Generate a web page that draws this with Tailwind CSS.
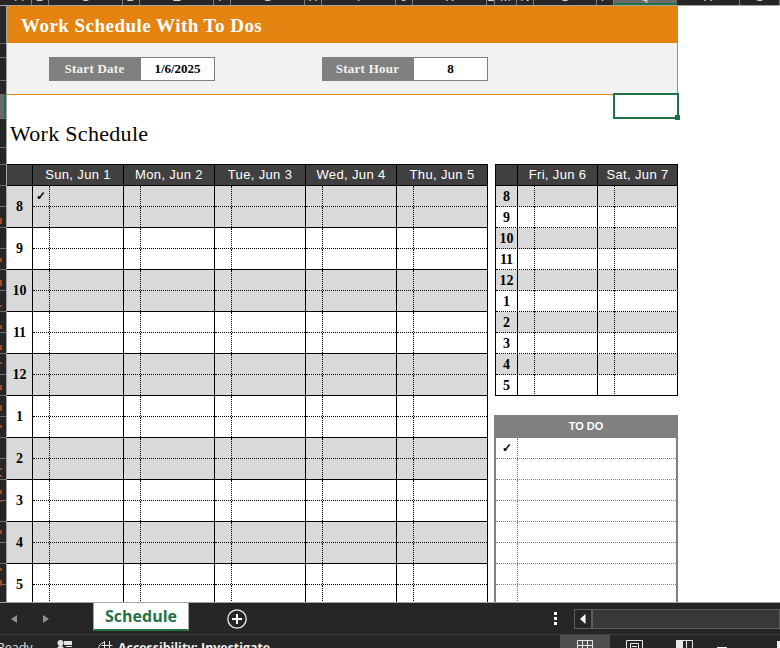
<!DOCTYPE html>
<html>
<head>
  <title>Work Schedule With To Dos</title>
  <script src="https://cdn.jsdelivr.net/npm/@tailwindcss/browser@4"></script>
</head>
<body class="bg-white">
  <div class="w-[780px] h-[648px] overflow-hidden flex flex-col font-['Liberation_Sans',sans-serif]">

    <!-- column letters, clipped by the ribbon above -->
    <div id="colHead" class="h-[6px] shrink-0 flex bg-[#262626] border-b border-[#a3a3a3] text-[#d4d4d4] text-[13px] leading-none overflow-hidden"></div>

    <div class="h-[596px] shrink-0 flex overflow-hidden relative">
      <!-- row numbers strip -->
      <div id="rowHead" class="w-[7px] shrink-0 bg-[#262626] border-r border-[#a3a3a3] relative overflow-hidden"></div>

      <!-- sheet -->
      <div class="flex-1 relative">
        <div class="w-[671px] h-[37px] bg-[#e58310] flex items-center pl-[14px] pt-[3px] text-white font-bold text-[19px] font-['Liberation_Serif',serif] tracking-[0.47px]">Work Schedule With To Dos</div>

        <div class="w-[671px] h-[52px] bg-[#f2f2f2] border-r border-b border-[#e58310] flex pt-[14px] pl-[42px] font-['Liberation_Serif',serif] text-[13px] font-bold">
          <div class="w-[91px] h-[24px] bg-[#808080] text-[#f2f2f2] flex items-center justify-center tracking-[0.25px]">Start Date</div>
          <div class="w-[75px] h-[24px] bg-white border border-[#808080] flex items-center justify-center text-black">1/6/2025</div>
          <div class="w-[107px]"></div>
          <div class="w-[91px] h-[24px] bg-[#808080] text-[#f2f2f2] flex items-center justify-center tracking-[0.25px]">Start Hour</div>
          <div class="w-[75px] h-[24px] bg-white border border-[#808080] flex items-center justify-center text-black">8</div>
        </div>

        <div class="h-[69px] pl-[3px] pt-[24px] text-[22px] leading-[30px] tracking-[0.3px] text-black font-['Liberation_Serif',serif]">Work Schedule</div>

        <div class="flex items-start gap-[7px]">
          <!-- five day table -->
          <div class="w-[481px]">
            <div class="grid grid-cols-[26px_repeat(5,91px)] h-[22px] bg-[#404040] border-y border-black text-white text-[13px] tracking-[0.35px]">
              <div class="border-r border-black"></div>
              <div class="border-r border-black flex items-center justify-center">Sun, Jun 1</div>
              <div class="border-r border-black flex items-center justify-center">Mon, Jun 2</div>
              <div class="border-r border-black flex items-center justify-center">Tue, Jun 3</div>
              <div class="border-r border-black flex items-center justify-center">Wed, Jun 4</div>
              <div class="border-r border-black flex items-center justify-center">Thu, Jun 5</div>
            </div>
            <div id="mainRows"></div>
          </div>

          <!-- weekend + to do -->
          <div class="w-[183px]">
            <div class="grid grid-cols-[22px_80px_80px] h-[22px] bg-[#404040] border-y border-l border-black text-white text-[13px] tracking-[0.35px]">
              <div class="border-r border-black"></div>
              <div class="border-r border-black flex items-center justify-center">Fri, Jun 6</div>
              <div class="border-r border-black flex items-center justify-center">Sat, Jun 7</div>
            </div>
            <div id="sideRows" class="border-b border-black"></div>

            <div class="w-[184px] -ml-px mt-[19px] border-x-2 border-[#808080]">
              <div class="h-[23px] -mx-[2px] bg-[#808080] text-white text-[11px] font-bold flex items-center justify-center">TO DO</div>
              <div id="todoRows"></div>
            </div>
          </div>
        </div>

        <!-- selected cell -->
        <div class="absolute left-[606px] top-[87px] w-[66px] h-[26px] border-2 border-[#217346]"></div>
        <div class="absolute left-[668px] top-[109px] w-[5px] h-[5px] bg-[#217346]"></div>
      </div>
    </div>

    <!-- sheet tabs -->
    <div class="h-[32px] shrink-0 bg-[#262626] border-t border-[#a3a3a3] flex items-start relative">
      <svg class="absolute left-[11px] top-[12px]" width="6" height="8" viewBox="0 0 6 8"><path d="M6 0 L0 4 L6 8 Z" fill="#8f8f8f"/></svg>
      <svg class="absolute left-[43px] top-[12px]" width="6" height="8" viewBox="0 0 6 8"><path d="M0 0 L6 4 L0 8 Z" fill="#8f8f8f"/></svg>
      <div class="ml-[93px] -mt-px w-[96px] h-[29px] bg-white border-x border-t border-[#a3a3a3] border-b-2 border-b-[#217346] flex items-center justify-center text-[#217346] text-[16px] font-bold font-['Open_Sans',sans-serif]">Schedule</div>
      <svg class="absolute left-[227px] top-[6px]" width="20" height="20" viewBox="0 0 20 20"><circle cx="10" cy="10" r="9.2" fill="none" stroke="#eeeeee" stroke-width="1.3"/><path d="M10 5 V15 M5 10 H15" stroke="#ffffff" stroke-width="2"/></svg>
      <div class="absolute left-[554px] top-[9px] flex flex-col gap-[2px]">
        <div class="w-[3px] h-[3px] bg-white"></div>
        <div class="w-[3px] h-[3px] bg-white"></div>
        <div class="w-[3px] h-[3px] bg-white"></div>
      </div>
      <div class="absolute left-[574px] top-[6px] w-[206px] h-[20px] flex border border-[#5c5c5c] bg-[#383838]">
        <div class="w-[18px] border-r-2 border-[#5c5c5c] flex items-center justify-center bg-[#262626]">
          <svg width="6" height="10" viewBox="0 0 6 10"><path d="M5.5 0 V10 L0 5 Z" fill="#ffffff"/></svg>
        </div>
      </div>
    </div>

    <!-- status bar -->
    <div class="h-[14px] shrink-0 bg-[#262626] border-t border-[#3d3d3d] relative overflow-hidden text-[12.5px] text-[#e2e2e2] font-['Open_Sans',sans-serif] leading-none">
      <div class="absolute -left-[3px] top-[7px]">Ready</div>
      <svg class="absolute left-[57px] top-[5px]" width="16" height="8" viewBox="0 0 16 8"><circle cx="3.5" cy="3" r="3" fill="#e2e2e2"/><rect x="7" y="1" width="8" height="4" fill="#e2e2e2"/><path d="M0 8 Q3.5 3 7 8 Z" fill="#e2e2e2"/><path d="M9 6.5 H15" stroke="#e2e2e2"/></svg>
      <svg class="absolute left-[96px] top-[6px]" width="17" height="8" viewBox="0 0 17 8" fill="none" stroke="#e2e2e2"><path d="M2.5 8 A7 7 0 0 1 8 1.5"/><path d="M8.5 0 V8 M5.5 4.5 H12 M13.5 0 V8 M11 4.5 H16.5"/></svg>
      <div class="absolute left-[118px] top-[7px] font-bold text-[12.4px] text-[#f0f0f0] whitespace-nowrap">Accessibility: Investigate</div>
      <div class="absolute left-[560px] top-0 w-[50px] h-[14px] bg-[#4f4f4f]"></div>
      <svg class="absolute left-[577px] top-[5px]" width="16" height="9" viewBox="0 0 16 9" fill="none" stroke="#e8e8e8"><path d="M.5 .5 H15.5 V12 H.5 Z M5.5 .5 V12 M10.5 .5 V12 M.5 5.5 H15.5"/></svg>
      <svg class="absolute left-[626px] top-[5px]" width="17" height="9" viewBox="0 0 17 9" fill="none" stroke="#e8e8e8"><path d="M.5 .5 H16.5 V12 H.5 Z M4.5 3.5 H12.5 V12 M4.5 3.5 V12 M6 6.5 H11"/></svg>
      <svg class="absolute left-[676px] top-[5px]" width="17" height="9" viewBox="0 0 17 9"><rect x="0" y="0" width="7" height="9" fill="#e8e8e8"/><path d="M7 .5 H16.5 V9 M10.5 0 V9" fill="none" stroke="#e8e8e8"/></svg>
      <div class="absolute left-[717px] top-[12px] w-[10px] h-[2px] bg-[#f0f0f0]"></div>
      <div class="absolute left-[777px] top-[6px] w-[3px] h-[8px] bg-[#f0f0f0]"></div>
    </div>
  </div>

  <script>
    // column letters
    const cols = [["A",25],["B",17],["C",74],["D",17],["E",74],["F",17],["G",74],["H",17],["I",74],["J",17],["K",74],["L",8],["M",22],["N",17],["O",63],["P",17],["Q",63],["R",63],["S",40]];
    const colHead = document.getElementById("colHead");
    const spacer = document.createElement("div");
    spacer.className = "w-[7px] shrink-0";
    colHead.appendChild(spacer);
    cols.forEach(([name, w]) => {
      const el = document.createElement("div");
      const selected = name === "Q";
      el.className = selected
        ? "shrink-0 text-center border-b-2 border-[#217346] bg-[#6a6a6a] overflow-hidden h-[5px]"
        : "shrink-0 text-center border-r border-[#7a7a7a] overflow-hidden h-[5px]";
      el.style.width = w + "px";
      el.innerHTML = '<div class="-mt-[10px]">' + name + "</div>";
      colHead.appendChild(el);
    });

    // row number strip: gray separators, selected row and the clipped digit marks
    const rowHead = document.getElementById("rowHead");
    const rowLines = [37, 51, 74, 88, 112, 141, 158, 179];
    for (let y = 200; y < 596; y += 21) rowLines.push(y);
    rowLines.forEach(y => {
      const el = document.createElement("div");
      el.className = "absolute left-0 w-full h-px bg-[#6e6e6e]";
      el.style.top = y + "px";
      rowHead.appendChild(el);
    });
    const selRow = document.createElement("div");
    selRow.className = "absolute left-0 top-[88px] w-full h-[24px] bg-[#6a6a6a] border-r-2 border-[#217346]";
    rowHead.appendChild(selRow);
    [[212,6],[252,4],[274,6],[299,2],[319,4],[339,5],[356,2],[379,5],[399,6],[419,3],[462,2],[469,2],[484,4],[494,2],[524,4],[562,3],[574,6]].forEach(([y, h]) => {
      const el = document.createElement("div");
      el.className = "absolute left-0 w-[2px] bg-[#9c4a1f]";
      el.style.top = y + "px";
      el.style.height = h + "px";
      rowHead.appendChild(el);
    });

    const hours = [8, 9, 10, 11, 12, 1, 2, 3, 4, 5];
    const check = '<span class="text-[12px] leading-none font-bold text-black font-[\'DejaVu_Sans\',sans-serif]">✓</span>';
    const hourFont = "font-['Liberation_Serif',serif] font-bold text-[14px] text-black";

    function slot(withCheck, last) {
      return '<div class="grid grid-cols-[17px_1fr] ' + (last ? "" : "border-b border-dotted border-black") + '">' +
        '<div class="border-r border-dotted border-black flex items-center justify-center">' + (withCheck ? check : "") + "</div><div></div></div>";
    }

    // five day table: each hour has two half rows
    document.getElementById("mainRows").innerHTML = hours.map((h, i) => {
      const shade = i % 2 === 0 ? "bg-[#d9d9d9]" : "bg-white";
      let days = "";
      for (let d = 0; d < 5; d++) {
        days += '<div class="border-r border-black grid grid-rows-[21px_20px]">' + slot(i === 0 && d === 0, false) + slot(false, true) + "</div>";
      }
      return '<div class="grid grid-cols-[26px_repeat(5,91px)] h-[42px] border-b border-black ' + shade + '">' +
        '<div class="border-r border-black flex items-center justify-center ' + hourFont + '">' + h + "</div>" + days + "</div>";
    }).join("");

    // weekend table: one row per hour
    document.getElementById("sideRows").innerHTML = hours.map((h, i) => {
      const shade = i % 2 === 0 ? "bg-[#d9d9d9]" : "bg-white";
      const last = i === hours.length - 1;
      const cell = '<div class="grid grid-cols-[17px_1fr] border-r border-black"><div class="border-r border-dotted border-black"></div><div></div></div>';
      return '<div class="border-l border-black ' + shade + '"><div class="grid grid-cols-[21px_1px_80px_80px] ' + (last ? "h-[20px]" : "h-[21px] border-b border-dotted border-black") + '">' +
        '<div class="flex items-center justify-center ' + hourFont + '">' + h + '</div><div class="bg-black"></div>' + cell + cell + "</div></div>";
    }).join("");

    // to do list
    let todo = "";
    for (let i = 0; i < 8; i++) {
      todo += '<div class="grid grid-cols-[22px_1fr] h-[21px] border-b border-dotted border-[#808080]">' +
        '<div class="border-r border-dotted border-[#808080] flex items-center justify-center">' + (i === 0 ? check : "") + "</div><div></div></div>";
    }
    document.getElementById("todoRows").innerHTML = todo;
  </script>
</body>
</html>
